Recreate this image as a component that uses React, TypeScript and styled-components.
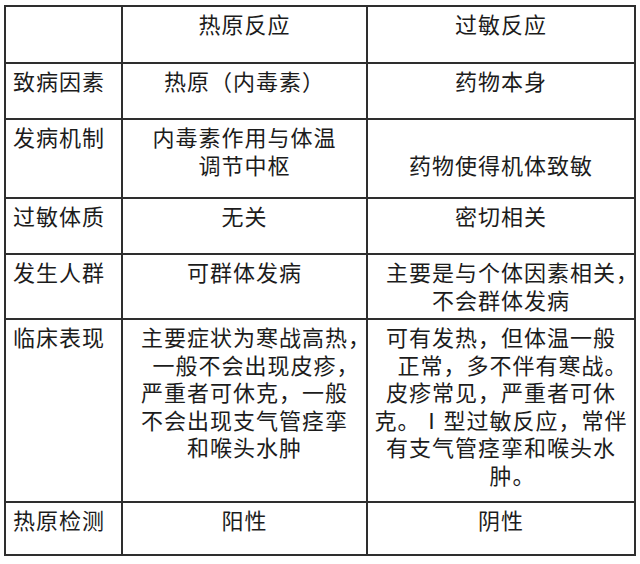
import { createGlobalStyle, styled } from "styled-components";

const GlobalStyle = createGlobalStyle`
  body {
    margin: 0;
    background: #ffffff;
    font-family: "Noto Sans CJK SC", "Noto Sans", sans-serif;
  }
`;

type RowData = {
  label: string;
  heat: string[];
  allergy: string[];
};

// 每行的文字按原图换行
const rows: RowData[] = [
  { label: "", heat: ["热原反应"], allergy: ["过敏反应"] },
  { label: "致病因素", heat: ["热原（内毒素）"], allergy: ["药物本身"] },
  {
    label: "发病机制",
    heat: ["内毒素作用与体温", "调节中枢"],
    allergy: ["", "药物使得机体致敏"],
  },
  { label: "过敏体质", heat: ["无关"], allergy: ["密切相关"] },
  {
    label: "发生人群",
    heat: ["可群体发病"],
    allergy: ["主要是与个体因素相关，", "不会群体发病"],
  },
  {
    label: "临床表现",
    heat: [
      "主要症状为寒战高热，",
      "一般不会出现皮疹，",
      "严重者可休克，一般",
      "不会出现支气管痉挛",
      "和喉头水肿",
    ],
    allergy: [
      "可有发热，但体温一般",
      "正常，多不伴有寒战。",
      "皮疹常见，严重者可休",
      "克。Ⅰ型过敏反应，常伴",
      "有支气管痉挛和喉头水",
      "肿。",
    ],
  },
  { label: "热原检测", heat: ["阳性"], allergy: ["阴性"] },
];

const hangChars = ["，", "。"];

const TextLine = ({ text }: { text: string }) => {
  if (!text) return <Line>&nbsp;</Line>;
  const last = text.slice(-1);
  if (hangChars.includes(last)) {
    return (
      <Line>
        {text.slice(0, -1)}
        <Hang>{last}</Hang>
      </Line>
    );
  }
  return <Line>{text}</Line>;
};

const App = () => {
  return (
    <>
      <GlobalStyle />
      <Table>
        {rows.map((row, i) => (
          <Row key={i}>
            <LabelCell>{row.label}</LabelCell>
            <Cell>
              {row.heat.map((t, j) => (
                <TextLine key={j} text={t} />
              ))}
            </Cell>
            <Cell>
              {row.allergy.map((t, j) => (
                <TextLine key={j} text={t} />
              ))}
            </Cell>
          </Row>
        ))}
      </Table>
    </>
  );
};

export default App;

const Table = styled.div`
  margin: 5px 0 0 4px;
  width: fit-content;
  display: grid;
  grid-template-columns: 115px 243px 266px;
  grid-template-rows: 55px 54px 77px 54px 63px 181px 51px;
  gap: 2px;
  padding: 2px;
  background: #2e2e2e;
`;

const Row = styled.div`
  display: contents;
`;

const BaseCell = styled.div`
  background: #ffffff;
  color: #1c1c1c;
  font-size: 22px;
  letter-spacing: 1px;
  line-height: 27.5px;
  padding-top: 3px;
`;

const LabelCell = styled(BaseCell)`
  padding-left: 7px;
  text-align: left;
`;

const Cell = styled(BaseCell)`
  text-align: center;
`;

const Line = styled.div`
  white-space: nowrap;
`;

const Hang = styled.span`
  margin-right: -23px;
`;
